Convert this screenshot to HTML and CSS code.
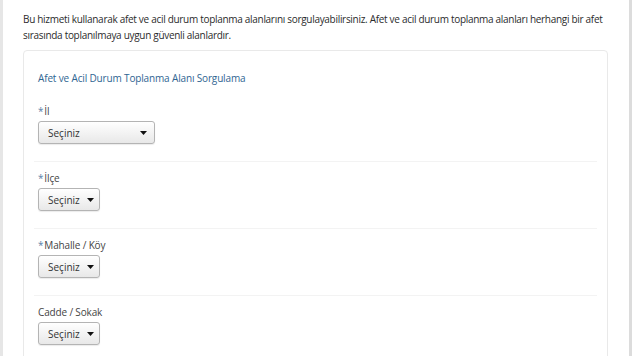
FILE: index.html
```html
<!DOCTYPE html>
<html lang="tr">
<head>
<meta charset="utf-8">
<title>Afet ve Acil Durum Toplanma Alanı Sorgulama</title>
<link rel="stylesheet" href="styles.css">
</head>
<body>
<div class="page">
  <p class="intro">Bu hizmeti kullanarak afet ve acil durum toplanma alanlarını sorgulayabilirsiniz. Afet ve acil durum toplanma alanları herhangi bir afet sırasında toplanılmaya uygun güvenli alanlardır.</p>
  <div class="card">
    <h2 class="card-title">Afet ve Acil Durum Toplanma Alanı Sorgulama</h2>
    <div class="group">
      <div class="label"><span class="req">*</span>İl</div>
      <div class="select wide"><span>Seçiniz</span><svg class="caret" width="7" height="4" viewBox="0 0 7 4"><path d="M0 0H7L3.5 4Z" fill="#111"/></svg></div>
    </div>
    <div class="group">
      <div class="label"><span class="req">*</span>İlçe</div>
      <div class="select"><span>Seçiniz</span><svg class="caret" width="7" height="4" viewBox="0 0 7 4"><path d="M0 0H7L3.5 4Z" fill="#111"/></svg></div>
    </div>
    <div class="group">
      <div class="label"><span class="req">*</span>Mahalle / Köy</div>
      <div class="select"><span>Seçiniz</span><svg class="caret" width="7" height="4" viewBox="0 0 7 4"><path d="M0 0H7L3.5 4Z" fill="#111"/></svg></div>
    </div>
    <div class="group">
      <div class="label">Cadde / Sokak</div>
      <div class="select"><span>Seçiniz</span><svg class="caret" width="7" height="4" viewBox="0 0 7 4"><path d="M0 0H7L3.5 4Z" fill="#111"/></svg></div>
    </div>
  </div>
</div>
</body>
</html>
```
FILE: styles.css
```css
html, body {
  margin: 0;
  padding: 0;
  background: #ffffff;
  height: 100%;
}
body {
  font-family: "Open Sans", "Liberation Sans", sans-serif;
  color: #333333;
  border-left: 3px solid #e6e6e6;
  border-right: 3px solid #dcdcdc;
  box-sizing: border-box;
  overflow: hidden;
}
.page {
  padding: 11px 21px 0 20px;
}
.intro {
  margin: 0;
  font-size: 10px;
  line-height: 16px;
  letter-spacing: -0.3px;
  color: #2b2b2b;
}
.card {
  margin-top: 7px;
  border: 1px solid #e9e9e9;
  border-radius: 4px;
  padding: 20px 10px 0 10px;
  height: 400px;
}
.card-title {
  margin: 0 0 10px 4px;
  font-size: 10px;
  line-height: 14px;
  font-weight: normal;
  letter-spacing: -0.15px;
  color: #2f6592;
}
.group {
  padding: 9px 4px 17px 4px;
  border-bottom: 1px solid #f3f3f3;
}
.label {
  font-size: 10px;
  line-height: 14px;
  letter-spacing: -0.15px;
  color: #444;
  margin-bottom: 3px;
}
.req {
  color: #5a7fa8;
  margin-right: 1px;
}
.select {
  box-sizing: border-box;
  width: 62px;
  height: 23px;
  border: 1px solid #b4b4b4;
  border-radius: 3px;
  background: linear-gradient(#ffffff, #e8e8e8);
  box-shadow: 0 1px 1px rgba(0,0,0,0.08);
  display: flex;
  align-items: center;
  justify-content: space-between;
  padding: 0 5px 0 9px;
  font-size: 10px;
  color: #333;
}
.select.wide {
  width: 117px;
  padding-right: 7px;
}
.caret {
  display: block;
}
```
